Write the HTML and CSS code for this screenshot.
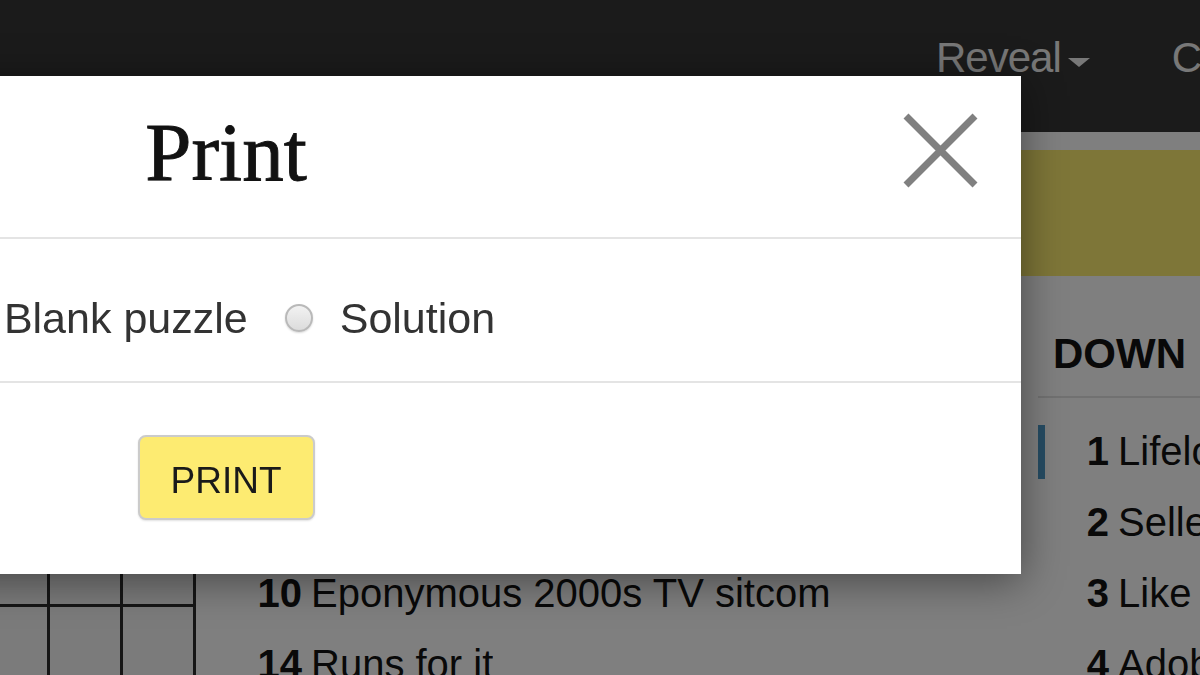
FILE: index.html
```html
<!DOCTYPE html>
<html lang="en">
<head>
<meta charset="utf-8">
<title>Print</title>
<link rel="stylesheet" href="styles.css">
</head>
<body>
<div class="page">
  <header class="topbar">
    <div class="nav-item">Reveal<span class="caret"></span></div>
    <div class="nav-item">Check<span class="caret"></span></div>
  </header>
  <div class="strip"></div>
  <div class="cluebar"></div>
  <main class="main">
    <div class="board">
      <div class="grid">
        <div class="cell"></div><div class="cell"></div><div class="cell"></div>
        <div class="cell"></div><div class="cell"></div><div class="cell"></div>
        <div class="cell"></div><div class="cell"></div><div class="cell"></div>
        <div class="cell"></div><div class="cell"></div><div class="cell"></div>
        <div class="cell"></div><div class="cell"></div><div class="cell"></div>
      </div>
    </div>
    <section class="col across">
      <h2 class="col-title">ACROSS</h2>
      <ol class="clues">
        <li class="clue"><span class="bar"></span><span class="num">1</span><span class="txt">Cry of discovery</span></li>
        <li class="clue"><span class="bar"></span><span class="num">5</span><span class="txt">Part of a plot</span></li>
        <li class="clue"><span class="bar"></span><span class="num">10</span><span class="txt">Eponymous 2000s TV sitcom</span></li>
        <li class="clue"><span class="bar"></span><span class="num">14</span><span class="txt">Runs for it</span></li>
      </ol>
    </section>
    <section class="col down">
      <h2 class="col-title">DOWN</h2>
      <ol class="clues">
        <li class="clue"><span class="bar active"></span><span class="num">1</span><span class="txt">Lifelong friend</span></li>
        <li class="clue"><span class="bar"></span><span class="num">2</span><span class="txt">Seller of goods</span></li>
        <li class="clue"><span class="bar"></span><span class="num">3</span><span class="txt">Like some stories</span></li>
        <li class="clue"><span class="bar"></span><span class="num">4</span><span class="txt">Adobe material</span></li>
      </ol>
    </section>
  </main>
</div>

<div class="overlay"></div>

<div class="modal" role="dialog" aria-label="Print">
  <div class="modal-header">
    <h1 class="modal-title">Print</h1>
    <button class="close" aria-label="Close">
      <svg width="75" height="75" viewBox="0 0 75 75"><path d="M3 3 L72 72 M72 3 L3 72" stroke="#808080" stroke-width="7" fill="none"/></svg>
    </button>
  </div>
  <div class="modal-body">
    <label class="option"><span class="radio checked"></span><span>Blank puzzle</span></label>
    <label class="option"><span class="radio"></span><span>Solution</span></label>
  </div>
  <div class="modal-footer">
    <button class="print-btn">PRINT</button>
  </div>
</div>
</body>
</html>
```

FILE: styles.css
```css
* { box-sizing: border-box; }
html, body { margin: 0; padding: 0; }
body {
  width: 1200px;
  height: 675px;
  overflow: hidden;
  background: #ffffff;
  font-family: "Liberation Sans", Arial, sans-serif;
  position: relative;
}

.page { display: flex; flex-direction: column; width: 1200px; }

.topbar {
  height: 132px;
  background: #363636;
  display: flex;
  gap: 82px;
  padding: 33px 0 0 936px;
  white-space: nowrap;
}
.nav-item {
  display: flex;
  align-items: center;
  height: 50px;
  color: #f0f0f0;
  font-size: 42px;
  letter-spacing: -1px;
  line-height: 50px;
}
.caret {
  width: 0; height: 0;
  margin-left: 7px;
  margin-top: 9px;
  border-left: 11px solid transparent;
  border-right: 11px solid transparent;
  border-top: 9px solid #f0f0f0;
}

.strip { height: 18px; background: #ffffff; }
.cluebar { height: 126px; background: #fdec70; }

.main {
  display: flex;
  gap: 35px;
  margin-left: -26px;
}
.board { width: 222px; flex: none; padding-top: 36px; }
.grid {
  display: grid;
  grid-template-columns: repeat(3, 70px);
  grid-auto-rows: 70px;
  gap: 3px;
  padding: 3px;
  background: #2c2c2c;
}
.cell { background: #f6f6f6; }

.col { display: flex; flex-direction: column; padding-top: 53px; }
.across { width: 772px; flex: none; }
.down { flex: 1; min-width: 0; }

.col-title {
  margin: 0;
  font-size: 42px;
  font-weight: 700;
  line-height: 50px;
  color: #121212;
  padding: 0 0 17px 15px;
  border-bottom: 2px solid #e2e2e2;
}
.clues { list-style: none; margin: 18px 0 0; padding: 0; }
.clue {
  display: flex;
  align-items: center;
  height: 71px;
  font-size: 40px;
  line-height: 71px;
  color: #121212;
  white-space: nowrap;
}
.bar { width: 7px; height: 54px; flex: none; margin-right: 12px; }
.bar.active { background: #4d98c6; }
.num { width: 52px; flex: none; text-align: right; font-weight: 700; margin-right: 9px; }
.txt { overflow: hidden; }

.overlay {
  position: fixed;
  inset: 0;
  background: rgba(0, 0, 0, 0.5);
}

.modal {
  position: absolute;
  top: 76px;
  left: -569px;
  width: 1590px;
  height: 498px;
  background: #ffffff;
  box-shadow: 0 6px 40px rgba(0, 0, 0, 0.45);
  display: flex;
  flex-direction: column;
}
.modal-header {
  position: relative;
  height: 163px;
  border-bottom: 2px solid #e4e4e4;
  display: flex;
  align-items: center;
  justify-content: center;
  padding-bottom: 9px;
}
.modal-title {
  margin: 0;
  font-family: "Liberation Serif", "Times New Roman", serif;
  font-weight: 400;
  font-size: 83px;
  line-height: 92px;
  color: #121212;
  -webkit-text-stroke: 0.9px #121212;
}
.close {
  position: absolute;
  top: 37px;
  right: 43px;
  width: 75px;
  height: 75px;
  padding: 0;
  border: 0;
  background: transparent;
}
.close svg { display: block; }

.modal-body {
  height: 144px;
  border-bottom: 2px solid #e4e4e4;
  display: flex;
  align-items: center;
  justify-content: center;
  gap: 37px;
  padding-top: 16px;
  padding-right: 8px;
  font-size: 43px;
  color: #333333;
}
.option { display: flex; align-items: center; gap: 27px; }
.radio {
  width: 28px; height: 28px;
  border-radius: 50%;
  border: 2px solid #b9b9b9;
  background: linear-gradient(#f2f2f2, #dcdcdc);
  box-shadow: 0 1px 2px rgba(0,0,0,0.15);
}
.radio.checked { background: radial-gradient(circle, #333 0 6px, #f2f2f2 7px); }

.modal-footer {
  flex: 1;
  display: flex;
  justify-content: center;
  align-items: flex-start;
  padding-top: 52px;
}
.print-btn {
  width: 177px;
  height: 85px;
  border: 2px solid #cbcbcb;
  border-radius: 8px;
  background: #fdeb71;
  font-family: "Liberation Sans", Arial, sans-serif;
  font-size: 37px;
  color: #1a1a1a;
  padding: 6px 0 0;
  box-shadow: 0 1px 2px rgba(0,0,0,0.12);
}
```
